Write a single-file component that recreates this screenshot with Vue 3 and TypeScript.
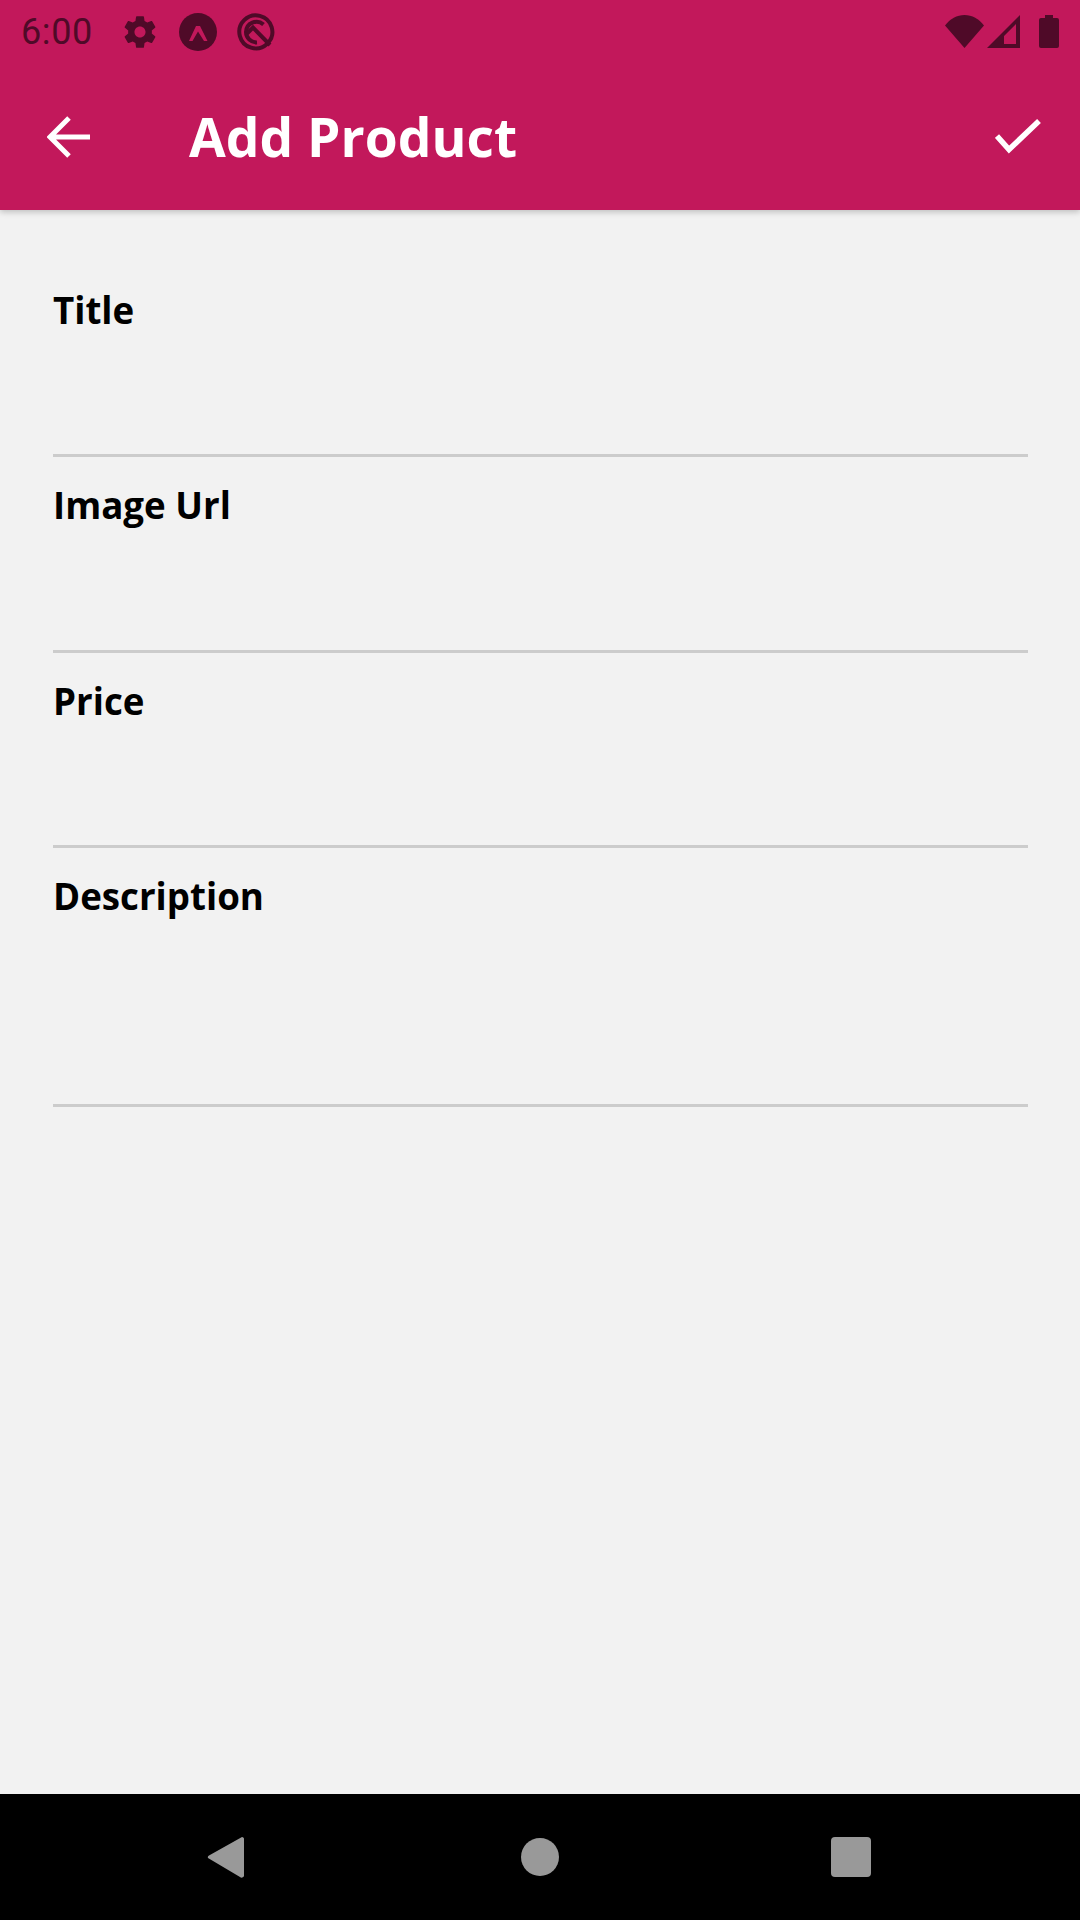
<script setup lang="ts">
const fields = [
  { label: 'Title', tall: false },
  { label: 'Image Url', tall: false },
  { label: 'Price', tall: false },
  { label: 'Description', tall: true },
]
</script>

<template>
  <div class="screen">
    <header class="appbar">
      <div class="status">
        <span class="time">6:00</span>
        <svg class="note gear" viewBox="0 0 24 24">
          <path d="M19.43 12.98c.04-.32.07-.64.07-.98s-.03-.66-.07-.98l2.11-1.65c.19-.15.24-.42.12-.64l-2-3.46c-.12-.22-.39-.3-.61-.22l-2.49 1c-.52-.4-1.08-.73-1.69-.98l-.38-2.65C14.46 2.18 14.25 2 14 2h-4c-.25 0-.46.18-.49.42l-.38 2.65c-.61.25-1.17.59-1.69.98l-2.49-1c-.23-.09-.49 0-.61.22l-2 3.46c-.13.22-.07.49.12.64l2.11 1.65c-.04.32-.07.65-.07.98s.03.66.07.98l-2.11 1.65c-.19.15-.24.42-.12.64l2 3.46c.12.22.39.3.61.22l2.49-1c.52.4 1.08.73 1.69.98l.38 2.65c.03.24.24.42.49.42h4c.25 0 .46-.18.49-.42l.38-2.65c.61-.25 1.17-.59 1.69-.98l2.49 1c.23.09.49 0 .61-.22l2-3.46c.12-.22.07-.49-.12-.64l-2.11-1.65zM12 15.5c-1.93 0-3.5-1.57-3.5-3.5s1.57-3.5 3.5-3.5 3.5 1.57 3.5 3.5-1.57 3.5-3.5 3.5z" />
        </svg>
        <svg class="note expo" viewBox="0 0 38 38">
          <circle cx="19" cy="19" r="19" />
          <path class="cut" d="M10 28 L17 13 H21 L28.5 28 H25 L19 18.5 L13.5 28 Z" />
        </svg>
        <svg class="note beta" viewBox="0 0 38 38">
          <path class="ring" d="M30 31 A16.5 16.5 0 1 1 31 30" />
          <path class="ring" d="M26.5 11.5 A10.5 10.5 0 0 0 9 19 A10.5 10.5 0 0 0 20 29.4" />
          <path class="ring" d="M10 20.5 L16 14.5 L33 32" />
        </svg>
        <span class="spacer"></span>
        <svg class="wifi" viewBox="0 0 39 33">
          <path d="M19.5 33 L0 10.5 C5 4 12 0 19.5 0 C27 0 34 4 39 10.5 Z" />
        </svg>
        <svg class="signal" viewBox="0 0 33 33">
          <path fill-rule="evenodd" d="M0 33 L33 0 V33 Z M17 29 H29 V9 L17 21 Z" />
        </svg>
        <svg class="battery" viewBox="0 0 20 33">
          <path d="M6 0 H14 V3 H18 A2 2 0 0 1 20 5 V31 A2 2 0 0 1 18 33 H2 A2 2 0 0 1 0 31 V5 A2 2 0 0 1 2 3 H6 Z" />
        </svg>
      </div>
      <div class="toolbar">
        <svg class="back" viewBox="0 0 44 42">
          <path d="M22 2 L3 21 L22 40 M3.5 21 H43" />
        </svg>
        <h1 class="title">Add Product</h1>
        <svg class="check" viewBox="0 0 46 35">
          <path d="M2 17 L14 30.5 L44 2" />
        </svg>
      </div>
    </header>

    <main class="form">
      <div v-for="f in fields" :key="f.label" class="field" :class="{ tall: f.tall }">
        <label class="label">{{ f.label }}</label>
      </div>
    </main>

    <footer class="navbar">
      <svg class="nav-back" viewBox="0 0 37 42">
        <path d="M35 1 L2 19.5 A2 2 0 0 0 1 22 L33 41 A2.5 2.5 0 0 0 37 40 V2.5 A2 2 0 0 0 35 1 Z" />
      </svg>
      <span class="nav-home"></span>
      <span class="nav-recent"></span>
    </footer>
  </div>
</template>

<style scoped>
.screen {
  width: 1080px;
  height: 1920px;
  display: flex;
  flex-direction: column;
  background: #f2f2f2;
  overflow: hidden;
}

.appbar {
  height: 210px;
  background: #c2185b;
  box-shadow: 0 2px 6px rgba(0, 0, 0, 0.22);
  position: relative;
  flex-shrink: 0;
}

.status {
  height: 63px;
  display: flex;
  align-items: center;
  padding: 0 21px 0 21px;
  color: #4f0a28;
  fill: #4f0a28;
}

.time {
  font-family: Roboto, sans-serif;
  font-size: 36px;
  letter-spacing: 0.6px;
  width: 100px;
}

.note {
  flex-shrink: 0;
}

.gear {
  width: 38px;
  height: 38px;
  margin-right: 20px;
}

.expo {
  width: 38px;
  height: 38px;
  margin-right: 20px;
}

.expo .cut {
  fill: #c2185b;
}

.beta {
  width: 38px;
  height: 38px;
}

.ring {
  fill: none;
  stroke: #4f0a28;
  stroke-width: 4;
}

.spacer {
  flex: 1;
}

.wifi {
  width: 39px;
  height: 33px;
  margin-right: 3px;
}

.signal {
  width: 33px;
  height: 33px;
  margin-right: 19px;
}

.battery {
  width: 20px;
  height: 33px;
}

.toolbar {
  height: 147px;
  display: flex;
  align-items: center;
  padding: 0 39px 10px 47px;
}

.back {
  width: 44px;
  height: 42px;
  margin-right: 98px;
}

.back path,
.check path {
  fill: none;
  stroke: #fff;
  stroke-width: 5;
}

.check path {
  stroke-width: 5.5;
}

.title {
  margin: 0;
  flex: 1;
  font-family: "Open Sans", sans-serif;
  font-weight: 700;
  font-size: 53.3px;
  line-height: 72px;
  color: #fff;
}

.check {
  width: 46px;
  height: 35px;
}

.form {
  flex: 1;
  padding: 52px 52px 0 53px;
}

.field {
  height: 195.33px;
  padding-top: 23px;
  border-bottom: 3px solid #ccc;
  box-sizing: border-box;
}

.field.tall {
  height: 259px;
}

.label {
  display: block;
  font-family: "Open Sans", sans-serif;
  font-weight: 700;
  font-size: 36.7px;
  line-height: 50px;
  color: #000;
}

.navbar {
  height: 126px;
  flex-shrink: 0;
  background: #000;
  display: flex;
  align-items: center;
  position: relative;
  padding-left: 207px;
}

.nav-back {
  width: 37px;
  height: 42px;
  fill: #999;
  margin-right: 277px;
}

.nav-home {
  width: 38px;
  height: 38px;
  border-radius: 50%;
  background: #999;
  margin-right: 272px;
}

.nav-recent {
  width: 40px;
  height: 40px;
  border-radius: 4px;
  background: #999;
}
</style>

<style>
html,
body {
  margin: 0;
}
</style>
